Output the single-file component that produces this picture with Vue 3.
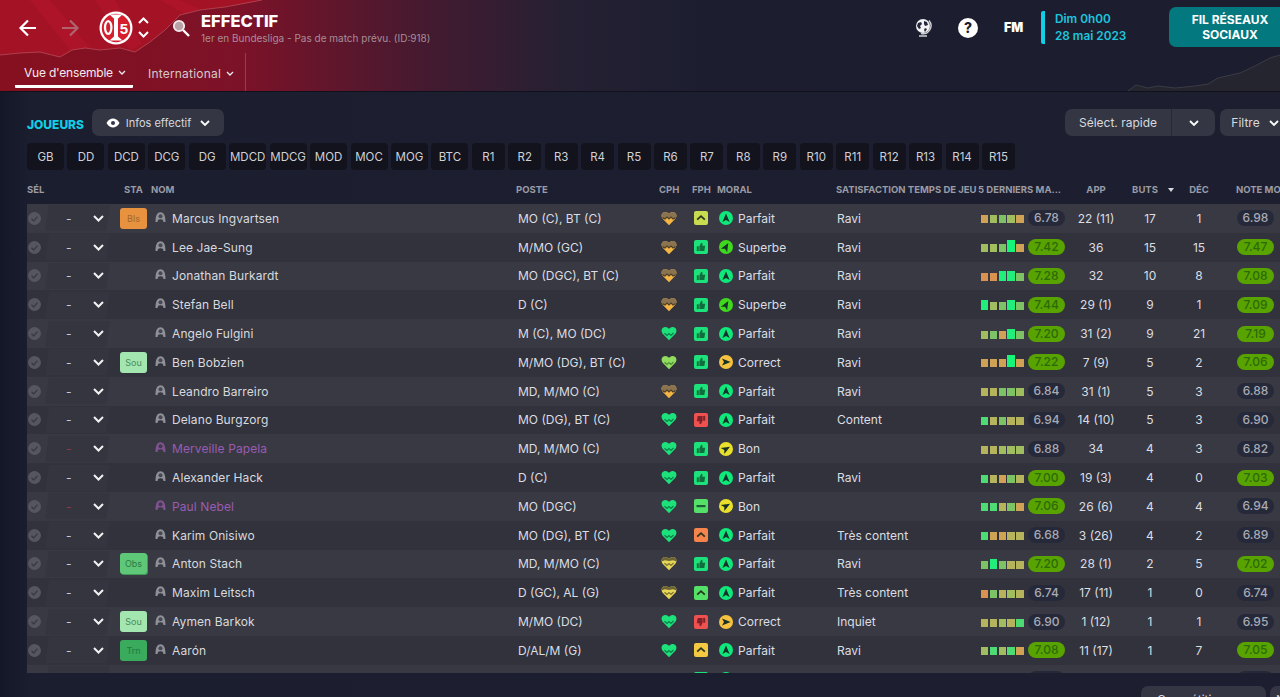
<template>
  <div class="app">
    <header class="top">
      <svg class="top-art" width="1280" height="92" viewBox="0 0 1280 92">
        <path d="M0 55 L20 53 L40 52 L60 57 L72 50 L85 48 L100 50 L120 48 L135 52 L150 42 L165 30 L180 15 L200 10 L225 7 L262 0 L0 0 Z" fill="#a41226" />
        <path d="M30 0 L70 50 L90 48 L50 0 Z M95 0 L130 50 L142 44 L115 0 Z M160 0 L185 14 L200 9 L180 0 Z" fill="#b5162b" opacity=".55" />
        <path d="M0 55 L20 53 L40 52 L60 57 L72 50 L85 48 L100 50 L120 48 L135 52 L150 42 L165 30 L180 15 L200 10 L225 7 L262 0" fill="none" stroke="#b9545f" stroke-width="1" opacity=".7" />
        <path d="M1128 91 L1136 85 L1148 88 L1158 86 L1175 88 L1195 86 L1208 84 L1218 78 L1240 73 L1255 66 L1270 58 L1280 55 L1280 91 Z" fill="#24252f" />
        <path d="M1128 91 L1136 85 L1148 88 L1158 86 L1175 88 L1195 86 L1208 84 L1218 78 L1240 73 L1255 66 L1270 58 L1280 55" fill="none" stroke="#3a3b46" stroke-width="1" />
      </svg>
      <div class="top-row">
        <svg class="nav-arrow" width="20" height="20" viewBox="0 0 20 20"><path d="M18 10H3M10 2.5 2.5 10l7.5 7.5" fill="none" stroke="#fff" stroke-width="2.2" /></svg>
        <svg class="nav-arrow next" width="20" height="20" viewBox="0 0 20 20"><path d="M2 10h15M10 2.5l7.5 7.5-7.5 7.5" fill="none" stroke="#b0636c" stroke-width="2.2" /></svg>
        <svg class="logo" width="34" height="34" viewBox="0 0 34 34">
          <circle cx="17" cy="17" r="16.5" fill="#fff" />
          <circle cx="17" cy="17" r="14.2" fill="#d51f2e" />
          <path d="M10.5 3.5h13L17 9.5z" fill="#fff" />
          <path d="M15 8h4v17.5l4.5 4h-13l4.5-4z" fill="#fff" />
          <ellipse cx="9.2" cy="16.5" rx="3.2" ry="6.4" fill="none" stroke="#fff" stroke-width="2.3" />
          <text x="24.8" y="22.5" class="logo-five">5</text>
        </svg>
        <div class="swap">
          <svg width="11" height="7" viewBox="0 0 11 7"><path d="M1 6l4.5-4.5L10 6" fill="none" stroke="#fff" stroke-width="2" /></svg>
          <svg width="11" height="7" viewBox="0 0 11 7"><path d="M1 1l4.5 4.5L10 1" fill="none" stroke="#fff" stroke-width="2" /></svg>
        </div>
        <svg class="search" width="18" height="18" viewBox="0 0 18 18">
          <circle cx="7" cy="7" r="5.2" fill="#b9a3a8" stroke="#f1e9ea" stroke-width="1.8" />
          <path d="M11 11l6 6" stroke="#fff" stroke-width="2.4" />
        </svg>
        <div class="title">
          <h1>EFFECTIF</h1>
          <p>1er en Bundesliga - Pas de match prévu. (ID:918)</p>
        </div>
        <svg class="globe" width="18" height="20" viewBox="0 0 18 20">
          <circle cx="9" cy="8" r="7" fill="#f1f1f3" />
          <path d="M4 5l3-1 1 2-2 2 1 2-2 1-2-3zM10 3l3 1 1 3-3 1-1-2zM11 10l2 1-2 3-1-2z" fill="#23253a" />
          <path d="M15 2.5a8 8 0 0 1-8 13M5 18h8" fill="none" stroke="#cfcfd4" stroke-width="1.4" />
        </svg>
        <span class="help">?</span>
        <span class="fm">FM</span>
        <div class="date">
          <span>Dim 0h00</span>
          <span>28 mai 2023</span>
        </div>
        <button class="social">FIL RÉSEAUX<br />SOCIAUX</button>
      </div>
      <nav class="tabs">
        <a class="tab active">Vue d'ensemble <svg width="8" height="5" viewBox="0 0 8 5"><path d="M1 1l3 3 3-3" fill="none" stroke="#eee" stroke-width="1.3" /></svg></a>
        <a class="tab">International <svg width="8" height="5" viewBox="0 0 8 5"><path d="M1 1l3 3 3-3" fill="none" stroke="#eee" stroke-width="1.3" /></svg></a>
      </nav>
    </header>

    <main class="content">
      <div class="toolbar">
        <strong class="section">JOUEURS</strong>
        <button class="btn view">
          <svg width="14" height="10" viewBox="0 0 14 10"><path d="M0.5 5C2.5 1.5 4.8 0.5 7 0.5S11.5 1.5 13.5 5C11.5 8.5 9.2 9.5 7 9.5S2.5 8.5 0.5 5Z" fill="#fff" /><circle cx="7" cy="5" r="2" fill="#34364a" /></svg>
          Infos effectif
          <svg width="10" height="6" viewBox="0 0 10 6"><path d="M1 1l4 4 4-4" fill="none" stroke="#fff" stroke-width="1.8" /></svg>
        </button>
        <div class="btn split">
          <span class="split-label">Sélect. rapide</span>
          <span class="split-arrow"><svg width="10" height="6" viewBox="0 0 10 6"><path d="M1 1l4 4 4-4" fill="none" stroke="#fff" stroke-width="1.8" /></svg></span>
        </div>
        <button class="btn filter">
          Filtre
          <svg width="10" height="6" viewBox="0 0 10 6"><path d="M1 1l4 4 4-4" fill="none" stroke="#fff" stroke-width="1.8" /></svg>
        </button>
      </div>

      <div class="positions">
        <button v-for="p in positions" :key="p" class="pos" :class="{ role: p.startsWith('R') }">{{ p }}</button>
      </div>

      <div class="cols head">
        <span>SÉL</span>
        <span></span>
        <span class="sta-head">STA</span>
        <span>NOM</span>
        <span>POSTE</span>
        <span>CPH</span>
        <span>FPH</span>
        <span>MORAL</span>
        <span class="wide">SATISFACTION TEMPS DE JEU</span>
        <span class="form-head">5 DERNIERS MA...</span>
        <span class="mid">APP</span>
        <span class="mid buts">BUTS <i class="sort"></i></span>
        <span class="mid">DÉC</span>
        <span class="note-head">NOTE MOY</span>
      </div>

      <div class="table">
        <div v-for="p in players" :key="p.name" class="cols row" :class="{ loan: p.loan }">
          <svg class="check" width="13" height="13" viewBox="0 0 13 13">
            <circle cx="6.5" cy="6.5" r="6.5" fill="#55565f" />
            <path d="M3.5 6.8l2.2 2.2 3.8-4.4" fill="none" stroke="#393a44" stroke-width="1.4" />
          </svg>
          <div class="sel">
            <template v-if="p.name">
              <span class="dash">-</span>
              <svg width="11" height="7" viewBox="0 0 11 7"><path d="M1 1l4.5 4.5L10 1" fill="none" stroke="#f2f2f4" stroke-width="2" /></svg>
            </template>
          </div>
          <div class="sta"><span v-if="p.st" class="badge" :class="p.st">{{ p.st }}</span></div>
          <div class="name">
            <svg v-if="p.name" width="11" height="10" viewBox="0 0 11 10">
              <path d="M.5 10C.5 3 2.5 .3 5.5 .3S10.5 3 10.5 10H8.4C8.4 8 7.5 7.3 5.5 7.3S2.6 8 2.6 10Z" fill="currentColor" />
              <circle cx="5.5" cy="4.2" r="2" fill="#2f3039" opacity=".75" />
            </svg>
            {{ p.name }}
          </div>
          <span>{{ p.pos }}</span>
          <svg class="heart" width="16" height="15" viewBox="0 0 16 15">
            <path d="M8 14.3L1.4 7.4C-.3 5 .5 1.5 4 1 6 .8 7.3 2 8 3 8.7 2 10 .8 12 1 15.5 1.5 16.3 5 14.6 7.4Z" :fill="hearts[p.cph].fill" />
            <path v-if="hearts[p.cph].top" :d="p.cph === 'y' ? topSmall : topLarge" :fill="hearts[p.cph].top" />
            <path :d="p.cph === 't' ? zigTop : zigMid" fill="none" :stroke="hearts[p.cph].line" stroke-width="1.2" />
          </svg>
          <svg class="fit" width="14" height="14" viewBox="0 0 14 14">
            <rect width="14" height="14" rx="2" :fill="fits[p.fph[0]]" />
            <path v-if="p.fph[1] === 'u'" d="M3.2 8.7L7 5.2l3.8 3.5" fill="none" stroke="#2a3320" stroke-width="1.7" />
            <rect v-else-if="p.fph[1] === 'm'" x="2.5" y="6" width="9" height="2.2" fill="#1c5c38" />
            <g v-else :transform="p.fph[1] === 'd' ? 'rotate(180 7 7)' : ''" :fill="p.fph[1] === 'd' ? '#7d2229' : '#0f6f3c'">
              <rect x="2.8" y="6.3" width="2" height="4.8" />
              <path d="M5.4 6.3L7.2 2.8C8.3 2.8 8.8 3.7 8.5 4.8L8.3 5.8H11.2L10.3 11.1H5.4Z" />
            </g>
          </svg>
          <div class="moral">
            <svg width="14" height="14" viewBox="0 0 14 14">
              <circle cx="7" cy="7" r="7" :fill="morals[p.mor].fill" />
              <path d="M7 2.4L10.6 11 7 9 3.4 11Z" fill="#16302a" :transform="`rotate(${morals[p.mor].angle} 7 7)`" />
            </svg>
            {{ p.name ? p.mor : '' }}
          </div>
          <span>{{ p.sat }}</span>
          <div class="bars">
            <i v-for="(b, i) in p.bars" :key="i" :class="'b' + b"></i>
          </div>
          <span class="pill" :class="{ good: +p.form >= 7 }">{{ p.form }}</span>
          <span class="mid">{{ p.app }}</span>
          <span class="mid">{{ p.buts }}</span>
          <span class="mid">{{ p.dec }}</span>
          <div class="note"><span class="pill" :class="{ good: +p.note >= 7 }">{{ p.note }}</span></div>
        </div>
      </div>

      <div class="foot">
        <button class="btn comp">Compétitions
          <svg width="10" height="6" viewBox="0 0 10 6"><path d="M1 1l4 4 4-4" fill="none" stroke="#fff" stroke-width="1.8" /></svg>
        </button>
        <button class="btn next-match">Nouveau</button>
      </div>
    </main>
  </div>
</template>

<script setup>
const positions = ['GB', 'DD', 'DCD', 'DCG', 'DG', 'MDCD', 'MDCG', 'MOD', 'MOC', 'MOG', 'BTC',
  'R1', 'R2', 'R3', 'R4', 'R5', 'R6', 'R7', 'R8', 'R9', 'R10', 'R11', 'R12', 'R13', 'R14', 'R15']

const topLarge = 'M1.4 6.6L4 8 6 6 8 8 10 6 12 8 14.6 6.6C16.3 5 15.5 1.5 12 1 10 .8 8.7 2 8 3 7.3 2 6 .8 4 1 .5 1.5-.3 5 1.4 6.6Z'
const topSmall = 'M1 5.2C.3 3.2 1.5 1.3 4 1 6 .8 7.3 2 8 3 8.7 2 10 .8 12 1 14.5 1.3 15.7 3.2 15 5.2L12 4.2 8 5 4 4.2Z'
const zigTop = 'M1.4 6.6L4 8 6 6 8 8 10 6 12 8 14.6 6.6'
const zigMid = 'M3.5 7.2L6 9.4 8 7.5 10 9.4 12.5 7'

const hearts = {
  g: { fill: '#1de27b', line: '#0d8048' },
  l: { fill: '#8fdc5e', line: '#4f8f3a' },
  t: { fill: '#f4b544', top: '#8a7350', line: '#4d3f28' },
  y: { fill: '#e6d658', top: '#6d6436', line: '#7d7430' },
}
const fits = { l: '#c8dc50', g: '#1de27b', m: '#55e068', o: '#f5834c', r: '#ef5050', y: '#f5c842' }
const morals = {
  Parfait: { fill: '#0fe87a', angle: 0 },
  Superbe: { fill: '#3fd81f', angle: 30 },
  Bon: { fill: '#eadf2a', angle: 60 },
  Correct: { fill: '#f7c33f', angle: 90 },
}

const p = (st, name, loan, pos, cph, fph, mor, sat, bars, form, app, buts, dec, note) =>
  ({ st, name, loan, pos, cph, fph, mor, sat, bars, form, app, buts, dec, note })

const players = [
  p('Bls', 'Marcus Ingvartsen', false, 'MO (C), BT (C)', 't', 'lu', 'Parfait', 'Ravi', 'TLGLT', '6.78', '22 (11)', 17, 1, '6.98'),
  p('', 'Lee Jae-Sung', false, 'M/MO (GC)', 't', 'gt', 'Superbe', 'Ravi', 'LLGNT', '7.42', '36', 15, 15, '7.47'),
  p('', 'Jonathan Burkardt', false, 'MO (DGC), BT (C)', 't', 'gt', 'Parfait', 'Ravi', 'OOMMG', '7.28', '32', 10, 8, '7.08'),
  p('', 'Stefan Bell', false, 'D (C)', 't', 'gt', 'Superbe', 'Ravi', 'MLGMG', '7.44', '29 (1)', 9, 1, '7.09'),
  p('', 'Angelo Fulgini', false, 'M (C), MO (DC)', 'g', 'gt', 'Parfait', 'Ravi', 'LGTMG', '7.20', '31 (2)', 9, 21, '7.19'),
  p('Sou', 'Ben Bobzien', false, 'M/MO (DG), BT (C)', 'l', 'gt', 'Correct', 'Ravi', 'TTTNT', '7.22', '7 (9)', 5, 2, '7.06'),
  p('', 'Leandro Barreiro', false, 'MD, M/MO (C)', 't', 'gt', 'Parfait', 'Ravi', 'YYGGL', '6.84', '31 (1)', 5, 3, '6.88'),
  p('', 'Delano Burgzorg', false, 'MO (DG), BT (C)', 'g', 'rd', 'Parfait', 'Content', 'BYGYY', '6.94', '14 (10)', 5, 3, '6.90'),
  p('', 'Merveille Papela', true, 'MD, M/MO (C)', 'g', 'gt', 'Bon', '', 'YYLLL', '6.88', '34', 4, 3, '6.82'),
  p('', 'Alexander Hack', false, 'D (C)', 'g', 'gt', 'Parfait', 'Ravi', 'BYTGY', '7.00', '19 (3)', 4, 0, '7.03'),
  p('', 'Paul Nebel', true, 'MO (DGC)', 'g', 'mm', 'Bon', '', 'BBYGT', '7.06', '26 (6)', 4, 4, '6.94'),
  p('', 'Karim Onisiwo', false, 'MO (DG), BT (C)', 'g', 'ou', 'Parfait', 'Très content', 'BTTYY', '6.68', '3 (26)', 4, 2, '6.89'),
  p('Obs', 'Anton Stach', false, 'MD, M/MO (C)', 'y', 'gt', 'Parfait', 'Ravi', 'GMGYY', '7.20', '28 (1)', 2, 5, '7.02'),
  p('', 'Maxim Leitsch', false, 'D (GC), AL (G)', 'y', 'mu', 'Parfait', 'Très content', 'OGYLY', '6.74', '17 (11)', 1, 0, '6.74'),
  p('Sou', 'Aymen Barkok', false, 'M/MO (DC)', 'g', 'rd', 'Correct', 'Inquiet', 'YYLYB', '6.90', '1 (12)', 1, 1, '6.95'),
  p('Trn', 'Aarón', false, 'D/AL/M (G)', 'g', 'yu', 'Parfait', 'Ravi', 'LBLBT', '7.08', '11 (17)', 1, 7, '7.05'),
  p('', '', false, '', 'g', 'gt', 'Parfait', '', 'GGGGG', '', '', '', '', ''),
]
</script>

<style>
html, body { background: #1b1d2e; overflow: hidden; }
</style>

<style scoped>
.app, .app * { box-sizing: border-box; }

.app {
  background: linear-gradient(90deg, #141728 0, #1b1e2f 30px, #1d1f30 100%);
  color: #dcdde2;
  display: flex;
  flex-direction: column;
  font-family: Inter, "Liberation Sans", sans-serif;
  font-size: 12px;
  height: 697px;
  overflow: hidden;
  width: 1280px;
}

button {
  border: 0;
  color: inherit;
  cursor: pointer;
  font: inherit;
}

.top {
  background: linear-gradient(90deg, #86101f 0, #7c1228 240px, #431a30 430px, #262033 560px, #1c1e2f 700px);
  border-bottom: 1px solid #10111c;
  flex: none;
  height: 92px;
  position: relative;
}

.top-art {
  left: 0;
  position: absolute;
  top: 0;
}

.top-row {
  align-items: center;
  display: flex;
  height: 55px;
  position: relative;
}

.top-row > * { flex: none; }

.nav-arrow { margin-left: 18px; }
.nav-arrow.next { margin-left: 22px; }
.logo { margin-left: 19px; }

.logo-five {
  fill: #fff;
  font: 700 15px "Liberation Sans", sans-serif;
  text-anchor: middle;
}

.swap {
  display: flex;
  flex-direction: column;
  gap: 7px;
  margin-left: 5px;
}

.search { margin-left: 23px; }

.title {
  margin-left: 11px;
  margin-top: 1px;
  width: 714px;
}

.title h1 {
  color: #fff;
  font-size: 16.5px;
  font-weight: 800;
  line-height: 20px;
  margin: 0;
}

.title p {
  color: #a98d97;
  font-size: 10px;
  line-height: 14px;
  margin: 0;
}

.globe { margin-left: -1px; }

.help {
  background: #fff;
  border-radius: 50%;
  color: #1d1f30;
  font-size: 14px;
  font-weight: 800;
  height: 20px;
  line-height: 20px;
  margin-left: 26px;
  text-align: center;
  width: 20px;
}

.fm {
  color: #fff;
  font-size: 12.5px;
  font-weight: 900;
  margin-left: 26px;
  width: 20px;
}

.date {
  border-left: 4px solid #10cfe6;
  border-radius: 2px;
  color: #1cc6de;
  display: flex;
  flex-direction: column;
  font-size: 11.8px;
  font-weight: 600;
  gap: 3px;
  line-height: 14px;
  margin-left: 17px;
  padding: 1px 0 1px 10px;
  width: 128px;
}

.social {
  background: #04787f;
  border-radius: 7px;
  color: #fff;
  font-size: 12px;
  font-weight: 700;
  height: 40px;
  line-height: 15px;
  margin-top: -2px;
  width: 122px;
}

.tabs {
  border-right: 1px solid #8b4250;
  display: flex;
  height: 38px;
  margin-top: -2px;
  padding: 0 0 0 15px;
  position: relative;
  width: 246px;
}

.tab {
  align-items: center;
  color: #d6c8cc;
  display: flex;
  flex: none;
  gap: 5px;
  height: 32px;
  letter-spacing: .2px;
  margin-top: 3px;
  padding: 2px 0 0 15px;
  white-space: nowrap;
}

.tab svg { flex: none; }

.tab.active {
  border-bottom: 3px solid #fff;
  border-radius: 1px;
  color: #f3eaec;
  letter-spacing: -.2px;
  padding: 3px 0 0 9px;
  width: 118px;
}

.content {
  flex: 1;
  padding: 17px 0 0 27px;
}

.toolbar {
  align-items: center;
  display: flex;
  height: 27px;
  width: 1263px;
}

.section {
  color: #10cfe6;
  font-size: 12px;
  font-weight: 800;
  margin-top: 3px;
  width: 65px;
}

.btn {
  align-items: center;
  background: #343644;
  border-radius: 7px;
  color: #d8d9de;
  display: flex;
  flex: none;
  height: 27px;
}

.view {
  font-size: 11px;
  gap: 6px;
  justify-content: center;
  width: 132px;
}

.view svg:last-child { margin-left: 3px; }

.split {
  margin-left: auto;
  width: 150px;
}

.split-label {
  border-right: 1px solid #272936;
  line-height: 27px;
  text-align: center;
  width: 107px;
}

.split-arrow {
  display: flex;
  flex: 1;
  justify-content: center;
}

.filter {
  gap: 9px;
  justify-content: center;
  margin-left: 5px;
  width: 70px;
}

.positions {
  display: flex;
  gap: 3.45px;
  margin-top: 7px;
}

.pos {
  background: #12131d;
  border-radius: 4px;
  color: #d0d1d6;
  flex: none;
  font-size: 11.5px;
  height: 27px;
  padding: 0;
  width: 37px;
}

.pos.role { width: 33px; }

.cols {
  align-items: center;
  display: grid;
  grid-template-columns: 18px 65px 41px 365px 143px 33px 25px 119px 142px 50px 43px 50px 58px 40px 61px;
  width: 1253px;
}

.head {
  color: #9a9ba5;
  font-size: 9.5px;
  font-weight: 700;
  height: 24px;
  margin-top: 10px;
  padding-bottom: 6px;
  white-space: nowrap;
}

.head span { display: block; }
.sta-head { margin-left: 14px; }
.form-head { grid-column: span 2; }
.note-head { margin-left: 17px; }

.buts {
  padding-right: 10px;
  position: relative;
}

.sort {
  border-left: 3.5px solid transparent;
  border-right: 3.5px solid transparent;
  border-top: 4px solid #d8d9de;
  left: 47px;
  position: absolute;
  top: 4px;
}

.table {
  height: 469px;
  overflow: hidden;
}

.row {
  background: #31323c;
  height: 28.8px;
}

.row:nth-child(odd) { background: #383943; }

.check { margin-left: 1px; }

.sel {
  align-items: center;
  display: flex;
  height: 26px;
  justify-content: space-between;
  padding: 0 6px 0 21px;
  position: relative;
}

.sel::before {
  background: #34353f;
  content: '';
  inset: 0 2px;
  position: absolute;
  transform: skewX(-8deg);
}

.sel > * { position: relative; }
.dash { color: #c9cad0; }
.loan .dash { color: #8f3a48; }

.badge {
  border-radius: 3px;
  display: block;
  font-size: 9px;
  height: 21px;
  line-height: 21px;
  margin-left: 10px;
  text-align: center;
  width: 27px;
}

.Bls { background: #e8913f; color: #a5682b; }
.Sou { background: #a4e6b0; color: #4b8a5c; }
.Obs { background: #5ec878; box-shadow: 1px 1px 0 #3f9a58; color: #2c7a45; }
.Trn { background: #3aaa5c; color: #1f7a3d; }

.name {
  align-items: center;
  color: #d8d9de;
  display: flex;
  gap: 6px;
  letter-spacing: .1px;
  padding-left: 4px;
}

.name svg {
  color: #8f9098;
  margin-top: -3px;
}

.loan .name { color: #9a5cb2; }
.loan .name svg { color: #7f5390; }

.row > span { white-space: nowrap; }
.row > span:nth-child(5) { padding-left: 2px; }
.row > span:nth-child(9) { padding-left: 1px; }

.heart { margin-left: 2px; }
.fit { margin-left: 2px; }

.moral {
  align-items: center;
  display: flex;
  gap: 5px;
  margin-left: 2px;
}

.bars {
  align-items: flex-end;
  display: flex;
  gap: 1.4px;
  height: 12px;
  margin-bottom: 2px;
  padding-left: 3px;
}

.bars i {
  background: #b5b35c;
  display: block;
  height: 8px;
  width: 7.4px;
}

.bT { background: #cfa255 !important; }
.bO { background: #d9924f !important; }
.bY { background: #b5b35c !important; }
.bL { background: #a0bd5f !important; }
.bG { background: #7ec266 !important; }
.bB { background: #4fdb74 !important; }
.bM { background: #22ee7c !important; height: 10px !important; }
.bN { background: #14f57a !important; height: 12px !important; }

.pill {
  background: #262939;
  border-radius: 8px;
  color: #a9abb4;
  display: block;
  font-size: 12px;
  font-weight: 500;
  height: 16px;
  line-height: 16px;
  text-align: center;
  width: 37px;
}

.pill.good {
  background: #58a300;
  color: #2c6a08;
}

.mid { text-align: center; }

.note { padding-left: 18px; }

.foot {
  display: flex;
  gap: 4px;
  justify-content: flex-end;
  margin-top: 13px;
  width: 1309px;
}

.comp {
  gap: 8px;
  justify-content: center;
  width: 125px;
}

.next-match {
  padding-left: 6px;
  width: 66px;
}
</style>
